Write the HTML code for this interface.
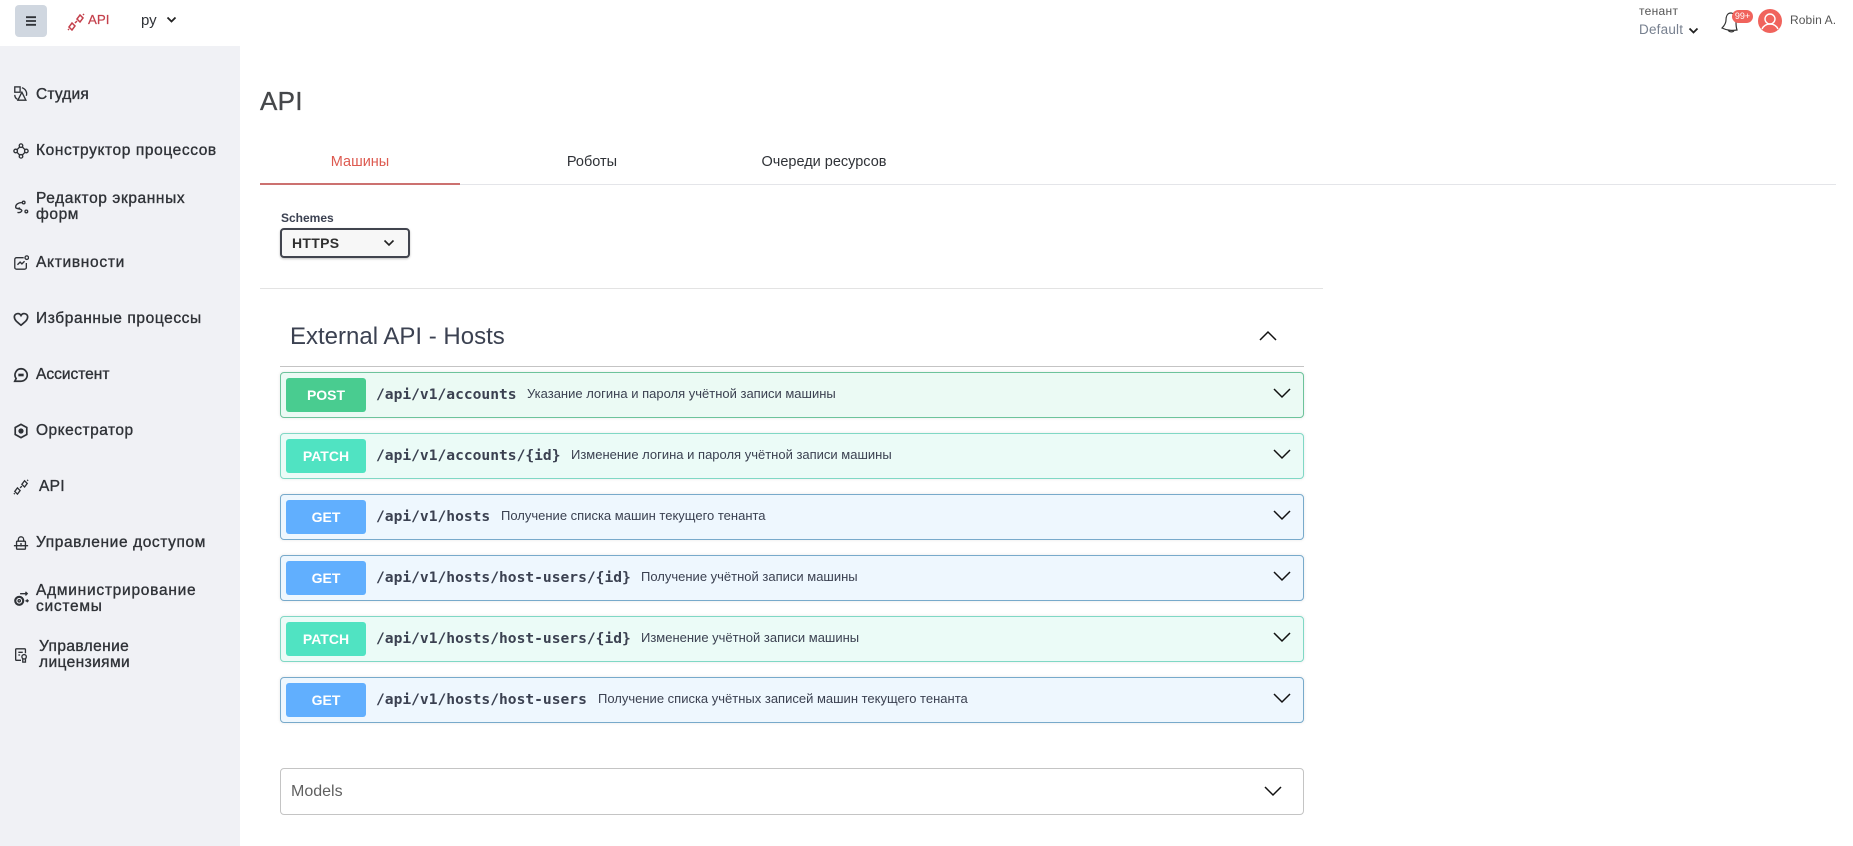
<!DOCTYPE html>
<html lang="ru"><head><meta charset="utf-8"><title>API</title>
<style>
html,body{margin:0;padding:0;width:1853px;height:846px;overflow:hidden;background:#fff;font-family:"Liberation Sans","Noto Sans CJK SC",sans-serif;color:#3b4151}
.a{position:absolute;white-space:nowrap}
#side{position:absolute;left:0;top:46px;width:240px;height:800px;background:#f0f1f5}
.m{position:absolute;left:36px;font-size:15.5px;line-height:16px;letter-spacing:.6px;margin-top:1px;color:#2f3237;-webkit-text-stroke:.35px #2f3237;white-space:nowrap;transform:translateY(-50%)}
.i{position:absolute;left:12.5px;width:16px;height:16px;fill:none;stroke:#2f3237;stroke-width:1.5;transform:translateY(-50%)}
.op{position:absolute;left:280px;width:1024px;height:46px;box-sizing:border-box;border:1px solid;border-radius:4px;box-shadow:0 0 3px rgba(0,0,0,.1)}
.post{background:#ebfaf4;border-color:#6dc39b}
.patch{background:#ebfbf7;border-color:#80d8c5}
.get{background:#eef7fe;border-color:#78aacb}
.b{position:absolute;left:5px;top:5px;width:80px;height:34px;border-radius:3px;color:#fff;font-weight:bold;font-size:14px;line-height:34px;text-align:center}
.post .b{background:#49cc90}.patch .b{background:#50e3c2}.get .b{background:#61affe}
.p{position:absolute;left:95px;top:0;line-height:44px;font-family:"DejaVu Sans Mono",monospace;font-weight:bold;font-size:14.6px;color:#3b4151;white-space:nowrap}
.d{position:absolute;top:0;line-height:42px;font-size:13px;color:#3b4151;white-space:nowrap}
.c{position:absolute;right:12px;top:15px;width:18px;height:11px;fill:none;stroke:#111;stroke-width:1.5}
</style></head><body>

<div class="a" style="left:15px;top:5px;width:32px;height:32px;background:#d0d7e0;border-radius:4px"></div>
<svg class="a" style="left:25px;top:16px" width="12" height="10"><path d="M1 1.2h10M1 5h10M1 8.800h10" stroke="#2f3237" stroke-width="1.800"/></svg>
<svg class="a" style="left:67px;top:13px" width="18" height="18" viewBox="0 0 18 18" fill="none" stroke="#c4404c" stroke-width="1.5"><path d="M2 14l3-4 3 3-3 4zM10 6l3-4 3 3-3 4zM8 10l2-2M2 16l-1 1M16 2l1-1"/></svg>
<div class="a" style="left:88px;top:12px;font-size:13.300px;line-height:16px;color:#c4404c;-webkit-text-stroke:.2px #c4404c">API</div>
<div class="a" style="left:141px;top:12px;font-size:15px;line-height:18px;color:#2f3237">ру</div>
<svg class="a" style="left:166px;top:16px" width="11" height="8"><path d="M1.500 1.500l4 4 4-4" fill="none" stroke="#222" stroke-width="1.800"/></svg>

<div class="a" style="left:1639px;top:4px;font-size:12px;line-height:14px;color:#555;letter-spacing:.3px">тенант</div>
<div class="a" style="left:1639px;top:21px;font-size:13.500px;line-height:17px;color:#77808f;letter-spacing:.2px">Default</div>
<svg class="a" style="left:1688px;top:27px" width="11" height="8"><path d="M1.500 1.500l4 4 4-4" fill="none" stroke="#222" stroke-width="1.800"/></svg>
<svg class="a" style="left:1720px;top:10px" width="20" height="24" viewBox="0 0 20 24" fill="none" stroke="#333" stroke-width="1.200"><path d="M11 3C7 3 6 7 6 10s-2 6-4 8c4 2 10 3 15 2-1-3-1-5-1-8 0-4-2-9-5-9zM8 20c1 2 4 2.500 6 1"/></svg>
<div class="a" style="left:1732px;top:10px;width:21px;height:13px;background:#f0635c;border-radius:7px;color:#fff;font-size:9px;line-height:13px;text-align:center">99+</div>
<svg class="a" style="left:1758px;top:9px" width="24" height="24" viewBox="0 0 24 24"><circle cx="12" cy="12" r="12" fill="#f0635c"/><circle cx="12" cy="10" r="5" fill="none" stroke="#fff" stroke-width="1.400"/><path d="M4 20c2-4 5-5 8-5s6 1 8 5" fill="none" stroke="#fff" stroke-width="1.400"/></svg>
<div class="a" style="left:1790px;top:13px;font-size:12px;line-height:15px;color:#555;letter-spacing:.1px">Robin A.</div>

<div id="side"></div>
<svg class="i" style="top:94px" viewBox="0 0 18 18"><rect x="2" y="1" width="6" height="6"/><path d="M10 2a7 7 0 0 1 5 9M2 10c0 2 1 4 3 5M10 7l-4.500 9h9z"/></svg>
<div class="m" style="top:94px;letter-spacing:.2px">Студия</div>
<svg class="i" style="top:151px" viewBox="0 0 18 18"><circle cx="9" cy="3" r="2"/><circle cx="9" cy="15" r="2"/><circle cx="3" cy="9" r="2"/><circle cx="15" cy="9" r="2"/><path d="M7.500 4.500L4.500 7.500M10.500 4.500l3 3M4.500 10.500l3 3M13.500 10.500l-3 3"/></svg>
<div class="m" style="top:150px">Конструктор процессов</div>
<svg class="i" style="top:207px" viewBox="0 0 18 18"><circle cx="12" cy="4" r="1.500"/><circle cx="15" cy="14" r="1.500"/><path d="M10 4C6 4 3 6 3 9s6 1 7 4c0 1-2 3-5 2M3 9c0 2 3 2 5 1"/></svg>
<div class="m" style="top:206px">Редактор экранных<br>форм</div>
<svg class="i" style="top:263px" viewBox="0 0 18 18"><path d="M12 3H4a2 2 0 0 0-2 2v9a2 2 0 0 0 2 2h9a2 2 0 0 0 2-2V9M5 11l3-3 2 2 3-3"/><circle cx="15.500" cy="3" r="2"/></svg>
<div class="m" style="top:262px;letter-spacing:.7px">Активности</div>
<svg class="i" style="top:319px" viewBox="0 0 18 18"><path d="M9 16C4 12 1.500 10 1.500 6.500A4 4 0 0 1 9 5a4 4 0 0 1 7.500 1.500C16.500 10 14 12 9 16z" stroke-width="1.900"/></svg>
<div class="m" style="top:318px">Избранные процессы</div>
<svg class="i" style="top:375px" viewBox="0 0 18 18"><path d="M9 2a7 7 0 0 1 0 14H2l1.500-3A7 7 0 0 1 9 2z" stroke-width="1.900"/><path d="M6 9h6" stroke-width="3"/></svg>
<div class="m" style="top:374px;letter-spacing:0">Ассистент</div>
<svg class="i" style="top:431px" viewBox="0 0 18 18"><path d="M9 1.500l6.500 3.500v8L9 16.500 2.500 13V5z" stroke-width="1.900"/><circle cx="9" cy="9" r="2.200" fill="#2f3237"/></svg>
<div class="m" style="top:430px;letter-spacing:.5px">Оркестратор</div>
<svg class="i" style="top:487px" viewBox="0 0 18 18"><path d="M2 14l3-4 3 3-3 4zM10 6l3-4 3 3-3 4zM8 10l2-2M2 16l-1 1M16 2l1-1"/></svg>
<div class="m" style="top:486px;left:39px;letter-spacing:.3px">API</div>
<svg class="i" style="top:543px" viewBox="0 0 18 18"><rect x="4" y="7" width="10" height="9" rx="1"/><path d="M6 7V5a3 3 0 0 1 6 0v2M1 12h16M9 9v4"/></svg>
<div class="m" style="top:542px">Управление доступом</div>
<svg class="i" style="top:599px" viewBox="0 0 18 18"><circle cx="7" cy="11" r="4.500" stroke-width="2.400"/><circle cx="7" cy="11" r="1.300"/><path d="M8 3h8M14 1l2 2-2 2M14 11h3M15.500 9.500L17 11l-1.500 1.500"/></svg>
<div class="m" style="top:598px;letter-spacing:.74px">Администрирование<br>системы</div>
<svg class="i" style="top:655px" viewBox="0 0 18 18"><path d="M9 15H4a1 1 0 0 1-1-1V3a1 1 0 0 1 1-1h9a1 1 0 0 1 1 1v4M6 6h5M6 9h2"/><circle cx="12.500" cy="11" r="2.500"/><path d="M11 13v4h3v-4"/></svg>
<div class="m" style="top:654px;left:39px;letter-spacing:.4px">Управление<br>лицензиями</div>

<div class="a" style="left:260px;top:86px;font-size:26px;line-height:30px;color:#45474a;letter-spacing:.3px;-webkit-text-stroke:.3px #45474a">API</div>
<div class="a" style="left:260px;top:153px;width:200px;text-align:center;font-size:14.500px;line-height:18px;color:#dd5a50">Машины</div>
<div class="a" style="left:492px;top:153px;width:200px;text-align:center;font-size:14.500px;line-height:18px;color:#2f3237">Роботы</div>
<div class="a" style="left:724px;top:153px;width:200px;text-align:center;font-size:14.500px;line-height:18px;color:#2f3237">Очереди ресурсов</div>
<div class="a" style="left:260px;top:184px;width:1576px;height:1px;background:#e4e5e9"></div>
<div class="a" style="left:260px;top:183px;width:200px;height:2px;background:#cc7170"></div>

<div class="a" style="left:281px;top:211px;font-size:12px;line-height:14px;font-weight:bold;color:#3b4151">Schemes</div>
<div class="a" style="left:280px;top:228px;width:130px;height:30px;box-sizing:border-box;border:2px solid #41444e;border-radius:4px;background:#f7f7f7;box-shadow:0 1px 2px rgba(0,0,0,.25)"></div>
<div class="a" style="left:292px;top:235px;font-size:14px;line-height:16px;font-weight:bold;color:#303030;letter-spacing:.3px">HTTPS</div>
<svg class="a" style="left:383px;top:239px" width="12" height="8"><path d="M1.500 1.500L6 6l4.500-4.500" fill="none" stroke="#222" stroke-width="1.600"/></svg>
<div class="a" style="left:260px;top:288px;width:1063px;height:1px;background:#e3e3e3"></div>

<div class="a" style="left:290px;top:322px;font-size:24px;line-height:29px;color:#3b4151">External API - Hosts</div>
<svg class="a" style="left:1259px;top:330px" width="18" height="11"><path d="M1 10L9 2l8 8" fill="none" stroke="#111" stroke-width="1.500"/></svg>
<div class="a" style="left:280px;top:366px;width:1024px;height:1px;background:#c4c4c4"></div>

<div class="op post" style="top:372px"><div class="b">POST</div><div class="p">/api/v1/accounts</div><div class="d" style="left:246px">Указание логина и пароля учётной записи машины</div><svg class="c" viewBox="0 0 18 11"><path d="M1 1l8 8 8-8"/></svg></div>
<div class="op patch" style="top:433px"><div class="b">PATCH</div><div class="p">/api/v1/accounts/{id}</div><div class="d" style="left:290px">Изменение логина и пароля учётной записи машины</div><svg class="c" viewBox="0 0 18 11"><path d="M1 1l8 8 8-8"/></svg></div>
<div class="op get" style="top:494px"><div class="b">GET</div><div class="p">/api/v1/hosts</div><div class="d" style="left:220px">Получение списка машин текущего тенанта</div><svg class="c" viewBox="0 0 18 11"><path d="M1 1l8 8 8-8"/></svg></div>
<div class="op get" style="top:555px"><div class="b">GET</div><div class="p">/api/v1/hosts/host-users/{id}</div><div class="d" style="left:360px">Получение учётной записи машины</div><svg class="c" viewBox="0 0 18 11"><path d="M1 1l8 8 8-8"/></svg></div>
<div class="op patch" style="top:616px"><div class="b">PATCH</div><div class="p">/api/v1/hosts/host-users/{id}</div><div class="d" style="left:360px">Изменение учётной записи машины</div><svg class="c" viewBox="0 0 18 11"><path d="M1 1l8 8 8-8"/></svg></div>
<div class="op get" style="top:677px"><div class="b">GET</div><div class="p">/api/v1/hosts/host-users</div><div class="d" style="left:317px">Получение списка учётных записей машин текущего тенанта</div><svg class="c" viewBox="0 0 18 11"><path d="M1 1l8 8 8-8"/></svg></div>

<div class="a" style="left:280px;top:768px;width:1024px;height:47px;box-sizing:border-box;border:1px solid #c4c4c4;border-radius:4px"></div>
<div class="a" style="left:291px;top:782px;font-size:16px;line-height:19px;color:#606060">Models</div>
<svg class="a" style="left:1264px;top:786px" width="18" height="11"><path d="M1 1l8 8 8-8" fill="none" stroke="#111" stroke-width="1.500"/></svg>
</body></html>
